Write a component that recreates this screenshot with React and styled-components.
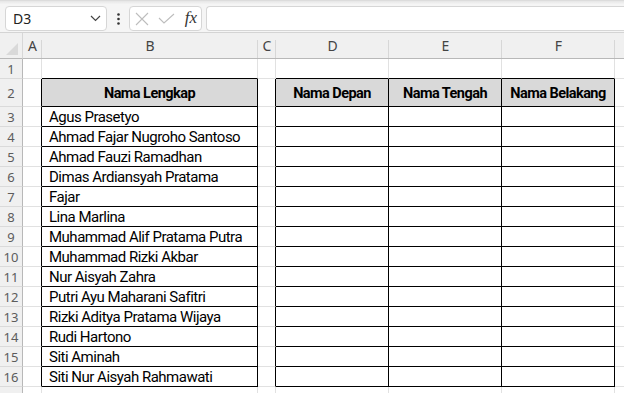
import React from "react";
import styled, { createGlobalStyle } from "styled-components";

const GlobalStyle = createGlobalStyle`
  html, body {
    margin: 0;
    padding: 0;
    background: #f5f5f5;
    overflow: hidden;
  }
  #root {
    width: 624px;
    height: 393px;
    overflow: hidden;
  }
`;

const COLS = [
  { name: "A", width: 19 },
  { name: "B", width: 216 },
  { name: "C", width: 18 },
  { name: "D", width: 113 },
  { name: "E", width: 113 },
  { name: "F", width: 113 },
  { name: "G", width: 40 },
];

const names = [
  "Agus Prasetyo",
  "Ahmad Fajar Nugroho Santoso",
  "Ahmad Fauzi Ramadhan",
  "Dimas Ardiansyah Pratama",
  "Fajar",
  "Lina Marlina",
  "Muhammad Alif Pratama Putra",
  "Muhammad Rizki Akbar",
  "Nur Aisyah Zahra",
  "Putri Ayu Maharani Safitri",
  "Rizki Aditya Pratama Wijaya",
  "Rudi Hartono",
  "Siti Aminah",
  "Siti Nur Aisyah Rahmawati",
];

const headers = { B: "Nama Lengkap", D: "Nama Depan", E: "Nama Tengah", F: "Nama Belakang" };

const GRID = "#e1e1e1";
const INK = "#000";

const Page = styled.div`
  width: 624px;
  display: flex;
  flex-direction: column;
  font-family: "Noto Sans", "Open Sans", sans-serif;
  & > * {
    flex-shrink: 0;
  }
`;

const TopBand = styled.div`
  height: 4px;
  background: linear-gradient(#e6e6e6, #f3f3f3);
  border-top: 1px solid #dcdcdc;
  box-sizing: border-box;
`;

const FormulaBar = styled.div`
  height: 29px;
  display: flex;
  align-items: flex-start;
  padding: 2px 0 0 5px;
  border-bottom: 1px solid #d4d4d4;
  box-sizing: border-box;
  background: #f5f5f5;
`;

const Box = styled.div`
  height: 25px;
  box-sizing: border-box;
  background: #fff;
  border: 1px solid #d6d6d6;
  border-radius: 4px;
  display: flex;
  align-items: center;
`;

const NameBox = styled(Box)`
  width: 102px;
  padding: 0 5px 0 7px;
  justify-content: space-between;
  font-size: 14px;
  color: #222;
`;

const Dots = styled.div`
  width: 22px;
  height: 25px;
  display: flex;
  align-items: center;
  justify-content: center;
`;

const FxBox = styled(Box)`
  width: 73px;
  padding: 0 4px 0 5px;
  justify-content: space-between;
`;

const Fx = styled.span`
  font-family: "Liberation Serif", "DejaVu Serif", serif;
  font-style: italic;
  font-size: 17px;
  color: #333;
  padding-bottom: 2px;
`;

const Input = styled(Box)`
  flex: 1;
  margin-left: 4px;
  border-right: none;
  border-radius: 4px 0 0 4px;
`;

const Sheet = styled.div`
  display: grid;
  grid-template-columns: 23px ${COLS.map((c) => `${c.width}px`).join(" ")};
  grid-template-rows: 26px 20px 28px repeat(14, 20px) 20px;
  background: #fff;
`;

const Cell = styled.div`
  box-sizing: border-box;
  border-right: 1px solid ${(p) => p.$right || GRID};
  border-bottom: 1px solid ${(p) => p.$bottom || GRID};
  background: ${(p) => (p.$fill ? "#d9d9d9" : "#fff")};
  font-family: "Roboto", "Liberation Sans", sans-serif;
  font-size: ${(p) => (p.$bold ? 14.5 : 15)}px;
  letter-spacing: ${(p) => (p.$bold ? -0.55 : -0.5)}px;
  font-weight: ${(p) => (p.$bold ? 700 : 400)};
  color: #000;
  display: flex;
  align-items: center;
  justify-content: ${(p) => (p.$center ? "center" : "flex-start")};
  padding-left: ${(p) => (p.$center ? 0 : 7)}px;
  padding-top: 1px;
  white-space: nowrap;
  overflow: hidden;
`;

const ColHead = styled.div`
  box-sizing: border-box;
  background: #f0f0f0;
  border-bottom: 1px solid #b8b8b8;
  position: relative;
  display: flex;
  align-items: flex-end;
  justify-content: center;
  padding-bottom: 3px;
  font-size: 14px;
  color: #444;
  &::after {
    content: "";
    position: absolute;
    right: 0;
    top: 7px;
    bottom: 0;
    width: 1px;
    background: ${(p) => (p.$last ? "transparent" : "#d7d7d7")};
  }
`;

const Corner = styled.div`
  box-sizing: border-box;
  background: #f0f0f0;
  border-bottom: 1px solid #b8b8b8;
  border-right: 1px solid #d7d7d7;
  display: flex;
  align-items: flex-end;
  justify-content: flex-end;
  padding: 0 4px 3px 0;
`;

const RowHead = styled.div`
  box-sizing: border-box;
  background: #f0f0f0;
  border-right: 1px solid #b8b8b8;
  border-bottom: 1px solid #dadada;
  display: flex;
  align-items: center;
  justify-content: center;
  font-size: 13px;
  color: #5c5c5c;
  padding-top: 1px;
`;

const tableCols = ["B", "D", "E", "F"];

function cellBorders(col, row) {
  const inRange = row >= 2 && row <= 16;
  let right;
  let bottom;
  if (tableCols.includes(col) && inRange) {
    right = INK;
    bottom = INK;
  }
  if ((col === "A" || col === "C") && inRange) right = INK;
  if (row === 1 && tableCols.includes(col)) bottom = INK;
  return { right, bottom };
}

function cellText(col, row) {
  if (row === 2) return headers[col] || "";
  if (col === "B" && row >= 3 && row <= 16) return names[row - 3];
  return "";
}

export default function App() {
  const rows = Array.from({ length: 17 }, (_, i) => i + 1);
  return (
    <Page>
      <GlobalStyle />
      <TopBand />
      <FormulaBar>
        <NameBox>
          <span>D3</span>
          <svg width="11" height="7" viewBox="0 0 11 7">
            <path d="M1 1l4.5 4.5L10 1" fill="none" stroke="#444" strokeWidth="1.2" />
          </svg>
        </NameBox>
        <Dots>
          <svg width="3" height="12" viewBox="0 0 3 12">
            <circle cx="1.5" cy="1.5" r="1.3" fill="#333" />
            <circle cx="1.5" cy="6" r="1.3" fill="#333" />
            <circle cx="1.5" cy="10.5" r="1.3" fill="#333" />
          </svg>
        </Dots>
        <FxBox>
          <svg width="14" height="14" viewBox="0 0 14 14">
            <path d="M1 1l12 12M13 1L1 13" stroke="#bdbdbd" strokeWidth="1.1" />
          </svg>
          <svg width="17" height="11" viewBox="0 0 17 11">
            <path d="M1 5l5 5L16 1" fill="none" stroke="#bdbdbd" strokeWidth="1.1" />
          </svg>
          <Fx>fx</Fx>
        </FxBox>
        <Input />
      </FormulaBar>
      <Sheet>
        <Corner>
          <svg width="12" height="12" viewBox="0 0 12 12">
            <path d="M12 0V12H0Z" fill="#d9d9d9" />
          </svg>
        </Corner>
        {COLS.map((c, i) => (
          <ColHead key={c.name} $last={i === COLS.length - 1}>
            {c.name}
          </ColHead>
        ))}
        {rows.map((r) => (
          <React.Fragment key={r}>
            <RowHead>{r <= 16 ? r : ""}</RowHead>
            {COLS.map((c) => {
              const { right, bottom } = cellBorders(c.name, r);
              const isHeader = r === 2 && tableCols.includes(c.name);
              return (
                <Cell
                  key={c.name}
                  $right={right}
                  $bottom={bottom}
                  $fill={isHeader}
                  $bold={isHeader}
                  $center={isHeader}
                >
                  {cellText(c.name, r)}
                </Cell>
              );
            })}
          </React.Fragment>
        ))}
      </Sheet>
    </Page>
  );
}
